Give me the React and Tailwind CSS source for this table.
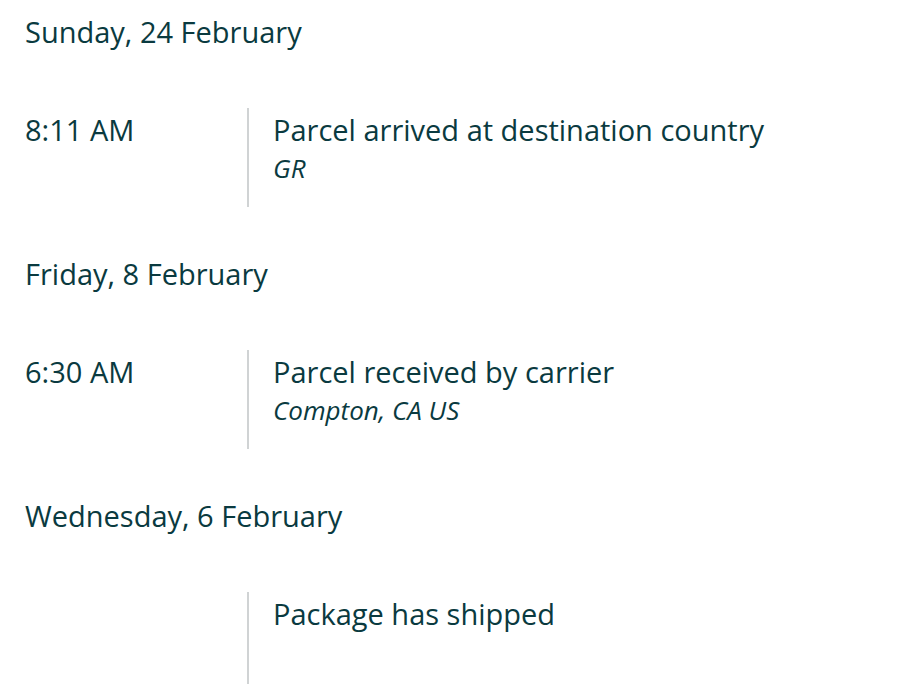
import React from 'react'

const events = [
  {
    date: 'Sunday, 24 February',
    rows: [{ time: '8:11 AM', title: 'Parcel arrived at destination country', place: 'GR' }]
  },
  {
    date: 'Friday, 8 February',
    rows: [{ time: '6:30 AM', title: 'Parcel received by carrier', place: 'Compton, CA US' }]
  },
  {
    date: 'Wednesday, 6 February',
    rows: [{ time: '', title: 'Package has shipped', place: '' }]
  }
]

export default function App() {
  return (
    <div className="h-screen overflow-hidden bg-white px-[25px] pt-[12px] font-['Open_Sans',sans-serif] text-[#0a3a40]">
      {events.map(ev => (
        <div key={ev.date} className="mb-[47px]">
          <h3 className="text-[29px] leading-[40px] font-normal">{ev.date}</h3>
          {ev.rows.map((row, i) => (
            <div key={i} className="mt-[56px] flex h-[99px]">
              <div className="w-[222px] shrink-0 pt-[2px] text-[29px] leading-[40px]">{row.time}</div>
              <div className="border-l-2 border-[#d0d3d4] pl-[24px] pt-[2px]">
                <p className="text-[29px] leading-[40px]">{row.title}</p>
                {row.place && <p className="text-[26px] leading-[36px] italic">{row.place}</p>}
              </div>
            </div>
          ))}
        </div>
      ))}
    </div>
  )
}
